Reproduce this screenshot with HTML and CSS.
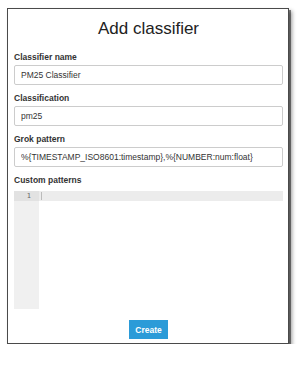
FILE: index.html
```html
<!DOCTYPE html>
<html>
<head>
  <title>Add classifier</title>
  <meta name="viewport" content="width=device-width, initial-scale=1.0">
  <link rel="stylesheet" href="styles.css">
</head>
<body>
  <div class="dialog">
    <h2 class="title">Add classifier</h2>

    <div class="field">
      <label class="label" for="name">Classifier name</label>
      <input type="text" id="name" class="input" value="PM25 Classifier">
    </div>

    <div class="field">
      <label class="label" for="classification">Classification</label>
      <input type="text" id="classification" class="input" value="pm25">
    </div>

    <div class="field">
      <label class="label" for="grok">Grok pattern</label>
      <input type="text" id="grok" class="input" value="%{TIMESTAMP_ISO8601:timestamp},%{NUMBER:num:float}">
    </div>

    <div class="field">
      <label class="label">Custom patterns</label>
      <!-- code editor: gutter + lines -->
      <div class="editor">
        <div class="gutter">
          <div class="lineno active">1</div>
        </div>
        <div class="lines">
          <div class="line active"><span class="cursor"></span></div>
        </div>
      </div>
    </div>

    <div class="actions">
      <button class="btn">Create</button>
    </div>
  </div>
</body>
</html>
```

FILE: styles.css
```css
body {
  margin: 0;
  padding: 8px 0 0 7px;
  background: #fff;
  font-family: "Liberation Sans", Arial, sans-serif;
  color: #333;
}

.dialog {
  width: 282px;
  box-sizing: border-box;
  border: 1px solid #4a4a4a;
  background: #fff;
  padding: 10px 5px 4px 6px;
  box-shadow: 2px 2px 0 rgba(0, 0, 0, 0.45), 3px 3px 4px rgba(0, 0, 0, 0.4);
}

.title {
  margin: 0 0 13px;
  font-size: 17px;
  line-height: 20px;
  font-weight: 400;
  text-align: center;
  color: #222;
}

.field {
  margin-bottom: 8px;
}

.label {
  display: block;
  font-size: 8.5px;
  line-height: 10px;
  font-weight: 700;
  margin-bottom: 3px;
  color: #333;
}

.input {
  display: block;
  width: 100%;
  height: 20px;
  box-sizing: border-box;
  border: 1px solid #ccc;
  border-radius: 2px;
  padding: 0 6px;
  font-family: "Liberation Sans", Arial, sans-serif;
  font-size: 8.5px;
  color: #333;
  background: #fff;
}

.editor {
  display: flex;
  margin-top: 6px;
  height: 118px;
}

.gutter {
  width: 25px;
  background: #f0f0f0;
}

.lineno {
  height: 10px;
  line-height: 10px;
  padding-right: 8px;
  text-align: right;
  font-family: "DejaVu Sans Mono", monospace;
  font-size: 7px;
  color: #666;
}

.lineno.active {
  background: #e2e2e2;
}

.lines {
  flex: 1;
}

.line {
  height: 10px;
  position: relative;
}

.line.active {
  background: #ececec;
}

.cursor {
  position: absolute;
  left: 2px;
  top: 1px;
  width: 1px;
  height: 8px;
  background: #bbb;
}

.actions {
  display: flex;
  justify-content: center;
  margin-top: 11px;
}

.btn {
  width: 39px;
  height: 19px;
  border: none;
  padding: 0;
  background: #2b9bd8;
  color: #fff;
  font-family: "Liberation Sans", Arial, sans-serif;
  font-size: 8.5px;
  font-weight: 700;
}
```
